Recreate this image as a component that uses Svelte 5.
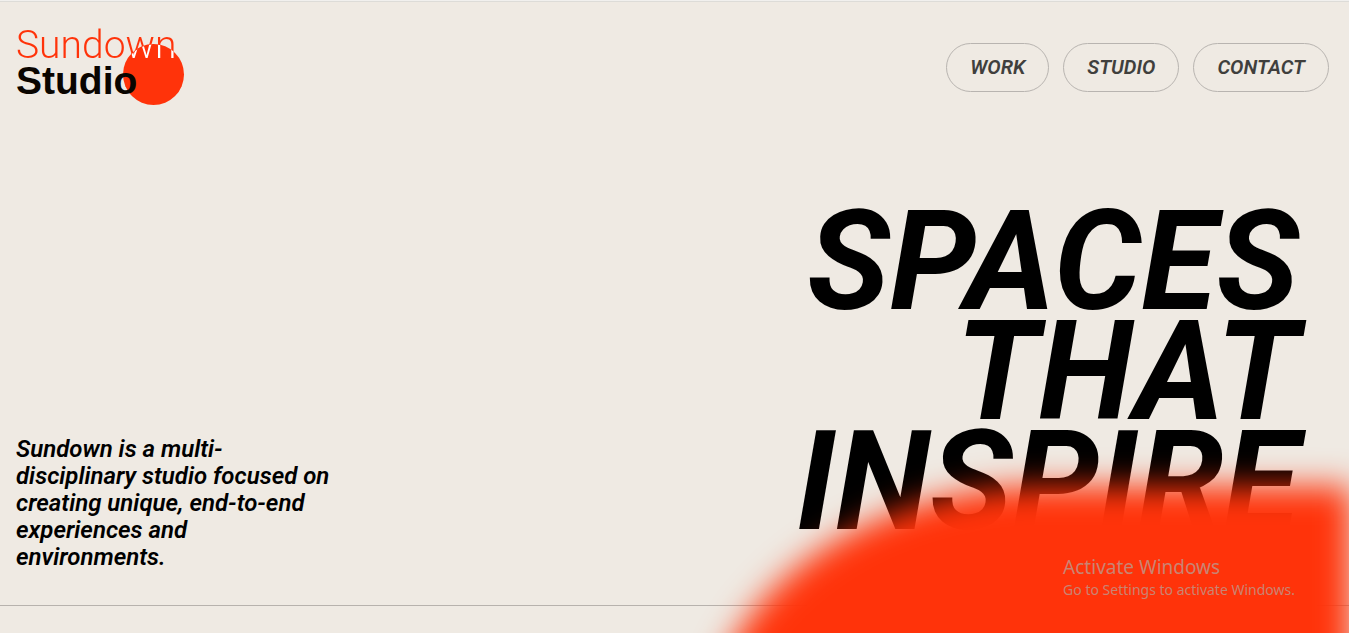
<script>
  const links = ['WORK', 'STUDIO', 'CONTACT'];
  const headline = ['SPACES', 'THAT', 'INSPIRE'];
</script>

<div class="page">
  <header>
    <a class="logo" href="#home" aria-label="Sundown Studio">
      <span class="sun"></span>
      <span class="first">Sundown</span>
      <span class="second">Studio</span>
    </a>
    <nav>
      {#each links as link}
        <a href={'#' + link.toLowerCase()}>{link}</a>
      {/each}
    </nav>
  </header>

  <main>
    <p>Sundown is a multi-disciplinary studio focused on creating unique, end-to-end experiences and environments.</p>
    <h1>
      {#each headline as word}
        <span>{word}</span>
      {/each}
    </h1>
  </main>

  <div class="glow"></div>

  <aside>
    <strong>Activate Windows</strong>
    <span>Go to Settings to activate Windows.</span>
  </aside>
</div>

<style>
  :global(body) {
    margin: 0;
    background: #efeae3;
  }

  .page {
    position: relative;
    box-sizing: border-box;
    min-height: 100vh;
    overflow: hidden;
    padding-bottom: 27px;
    border-top: 1px solid #f1f0ee;
    background: #efeae3;
    color: #000;
    font-family: Roboto, 'Liberation Sans', sans-serif;
    display: flex;
    flex-direction: column;
  }

  header {
    display: flex;
    justify-content: space-between;
    align-items: center;
    border-top: 1px solid #dddcd8;
    padding: 23px 20px 0 16px;
  }

  .logo {
    position: relative;
    display: flex;
    flex-direction: column;
    width: 168px;
    padding: 2px 0 10px;
    font-size: 39px;
    line-height: 36px;
    text-decoration: none;
  }

  .sun {
    position: absolute;
    right: 0;
    bottom: 4px;
    width: 61px;
    height: 61px;
    border-radius: 50%;
    background: #ff330a;
  }

  .first {
    position: relative;
    font-weight: 300;
    color: transparent;
    background: radial-gradient(circle at 138px 48px, #fff 30px, #ff330a 31px);
    background-clip: text;
    -webkit-background-clip: text;
  }

  .second {
    position: relative;
    color: #0a0500;
    font-family: 'Liberation Sans', sans-serif;
    font-weight: 700;
  }

  nav {
    display: flex;
    gap: 14px;
  }

  nav a {
    padding: 0 23px;
    border: 1px solid #b8b4b0;
    border-radius: 25px;
    color: #403f3d;
    font-size: 20px;
    font-style: italic;
    font-weight: 600;
    line-height: 47px;
    text-decoration: none;
  }

  main {
    flex: 1;
    display: flex;
    justify-content: space-between;
    align-items: flex-end;
    padding: 0 50px 34px 16px;
    border-bottom: 1px solid #b7b2ad;
  }

  p {
    width: 320px;
    margin: 0;
    font-size: 24px;
    font-style: italic;
    font-weight: 600;
    line-height: 27px;
  }

  h1 {
    margin: 0 0 34px;
    font-size: 138px;
    font-style: italic;
    font-weight: 700;
    line-height: 110px;
    text-align: right;
  }

  h1 span {
    display: block;
  }

  .glow {
    position: absolute;
    top: 485px;
    right: -2px;
    width: 646px;
    height: 500px;
    border-radius: 340px 0 0 0 / 260px 0 0 0;
    background: #ff330a;
    filter: blur(16px);
  }

  aside {
    position: absolute;
    right: 54px;
    bottom: 33px;
    display: flex;
    flex-direction: column;
    color: #c98473;
    font-family: 'Noto Sans', 'Open Sans', sans-serif;
    font-size: 14px;
    line-height: 20px;
  }

  aside strong {
    font-size: 19px;
    font-weight: 400;
    line-height: 26px;
  }
</style>
